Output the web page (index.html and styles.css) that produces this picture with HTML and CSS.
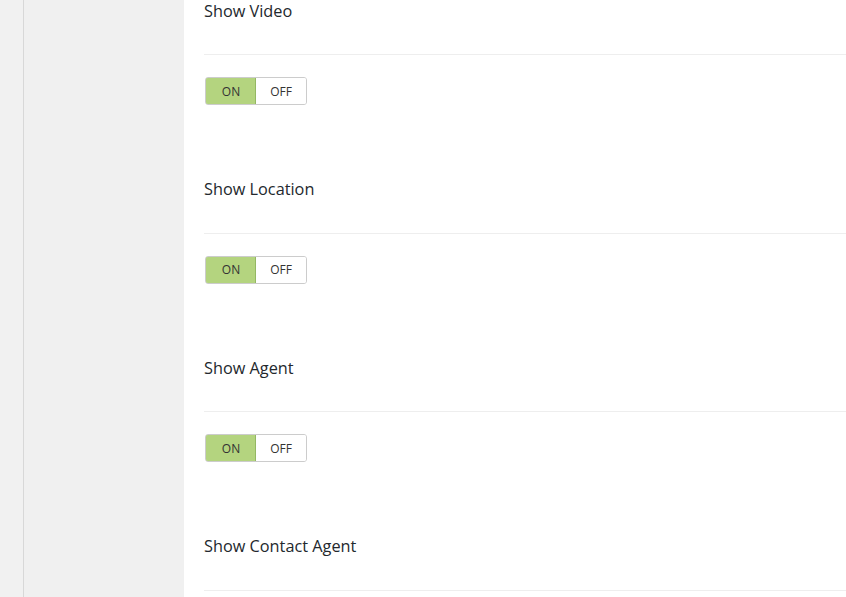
FILE: index.html
```html
<!DOCTYPE html>
<html>
<head>
<meta charset="utf-8">
<link rel="stylesheet" href="styles.css">
</head>
<body>
<div class="layout">
  <div class="rail"></div>
  <div class="sidebar"></div>
  <main class="panel">
    <section class="setting">
      <div class="setting-title">Show Video</div>
      <div class="toggle"><span class="opt on">ON</span><span class="opt">OFF</span></div>
    </section>
    <section class="setting">
      <div class="setting-title">Show Location</div>
      <div class="toggle"><span class="opt on">ON</span><span class="opt">OFF</span></div>
    </section>
    <section class="setting">
      <div class="setting-title">Show Agent</div>
      <div class="toggle"><span class="opt on">ON</span><span class="opt">OFF</span></div>
    </section>
    <section class="setting">
      <div class="setting-title">Show Contact Agent</div>
    </section>
  </main>
</div>
</body>
</html>
```

FILE: styles.css
```css
html, body {
  margin: 0;
  padding: 0;
  height: 100%;
  overflow: hidden;
}
body {
  background: #f1f1f1;
  font-family: "Open Sans", "Noto Sans", sans-serif;
  color: #23282d;
}
.layout {
  display: flex;
  height: 597px;
}
.rail {
  width: 23px;
  border-right: 1px solid #d8d8d8;
  background: #f1f1f1;
}
.sidebar {
  width: 160px;
  background: #f0f0f0;
}
.panel {
  flex: 1;
  background: #fff;
  padding: 0 0 0 20px;
}
.setting-title {
  font-size: 16.3px;
  line-height: 20px;
  padding-top: 0.5px;
  padding-bottom: 33.5px;
  border-bottom: 1px solid #eeeeee;
}
.toggle {
  display: inline-flex;
  vertical-align: top;
  margin: 22px 0 73.67px 1px;
  height: 28px;
  box-sizing: border-box;
  border: 1px solid #cccccc;
  border-radius: 3px;
  overflow: hidden;
}
.opt {
  width: 50px;
  display: flex;
  align-items: center;
  justify-content: center;
  font-size: 12px;
  color: #333;
  background: #fff;
}
.opt.on {
  background: #b4d47f;
  box-shadow: inset 0 0 0 1px #94b863;
  margin: -1px 0 -1px -1px;
  padding: 1px 0 1px 1px;
  border-radius: 3px 0 0 3px;
}
```
